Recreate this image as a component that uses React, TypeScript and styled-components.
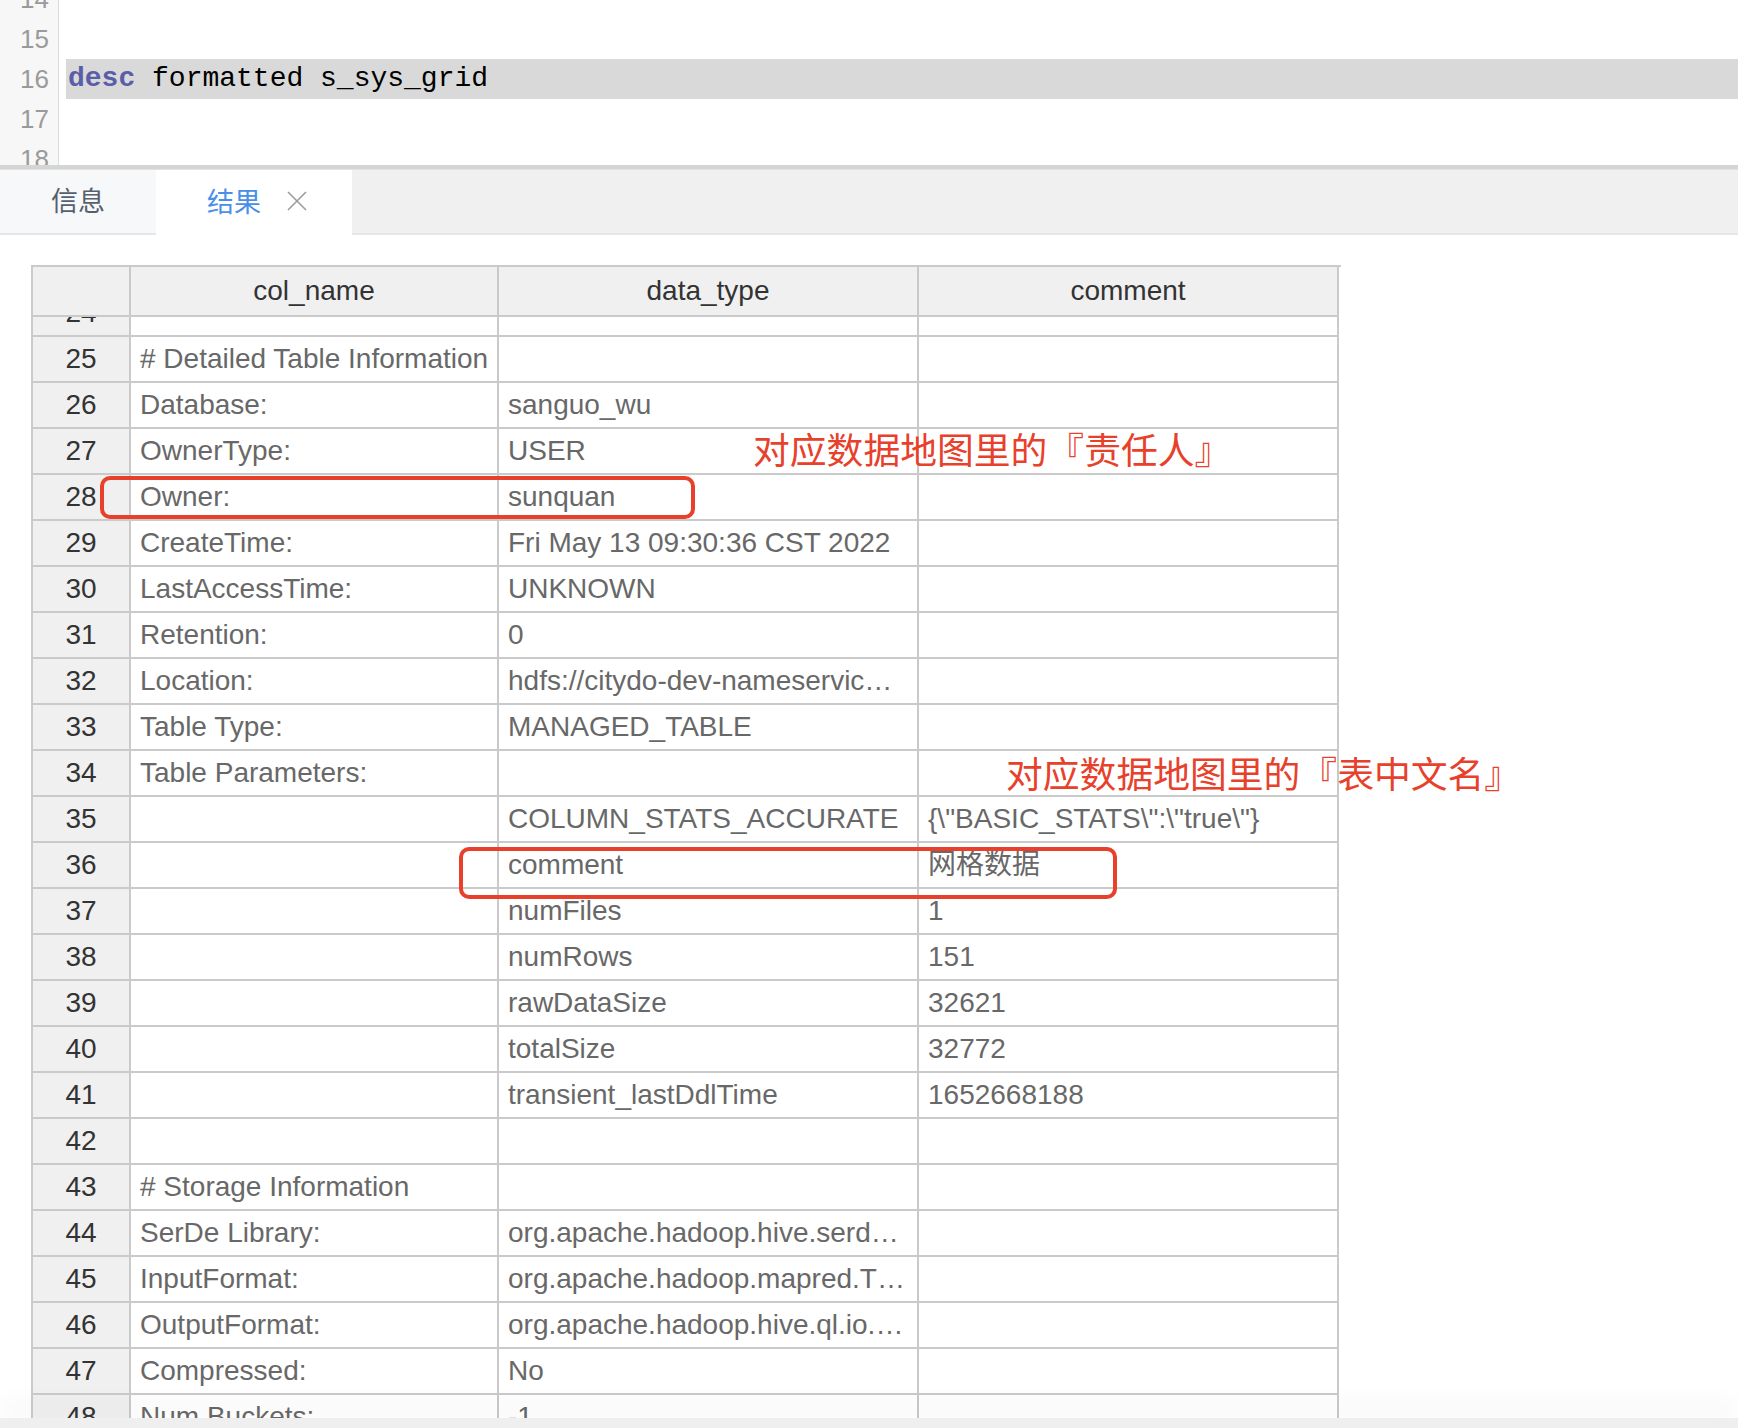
import React, { useLayoutEffect, useRef } from "react";
import styled, { createGlobalStyle } from "styled-components";

const GlobalStyle = createGlobalStyle`
  html, body {
    margin: 0;
    padding: 0;
    background: #fff;
  }
  body {
    font-family: "Liberation Sans", Arial, "Noto Sans CJK SC", sans-serif;
  }
  * {
    box-sizing: border-box;
  }
`;

const Page = styled.div`
  height: 100vh;
  display: flex;
  flex-direction: column;
  overflow: hidden;
`;

/* ---------- editor ---------- */

const Editor = styled.div`
  flex: none;
  height: 169px;
  overflow: hidden;
  border-bottom: 4px solid #d5d5d5;
`;

const EditorInner = styled.div`
  display: flex;
`;

const Gutter = styled.div`
  width: 59px;
  flex: none;
  background: #f7f7f7;
  border-right: 1px solid #dcdcdc;
`;

const LineNo = styled.div`
  height: 40px;
  line-height: 40px;
  padding-right: 9px;
  text-align: right;
  font-family: "Liberation Sans", Arial, sans-serif;
  font-size: 26px;
  color: #9a9a9a;
`;

const Code = styled.div`
  flex: 1;
  padding-left: 7px;
`;

const CodeLine = styled.div<{ $active?: boolean }>`
  height: 40px;
  line-height: 40px;
  padding-left: 2px;
  font-family: "Liberation Mono", "Courier New", monospace;
  font-size: 28px;
  color: #000;
  white-space: pre;
  background: ${(p) => (p.$active ? "#d9d9d9" : "transparent")};
`;

const Keyword = styled.span`
  color: #5a5ea8;
  font-weight: 700;
`;

/* ---------- tabs ---------- */

const TabBar = styled.div`
  flex: none;
  height: 66px;
  display: flex;
  background: #f0f0f0;
  border-top: 1px solid #e2e2e2;
  border-bottom: 2px solid #e3e7eb;
`;

const Tab = styled.div<{ $active?: boolean; $width: number }>`
  width: ${(p) => p.$width}px;
  display: flex;
  align-items: center;
  gap: 26px;
  padding: 0 0 4px 51px;
  margin-bottom: ${(p) => (p.$active ? "-2px" : "0")};
  background: ${(p) => (p.$active ? "#fff" : "#f7f8f9")};
  font-family: "Noto Sans CJK SC", sans-serif;
  font-size: 27px;
  color: ${(p) => (p.$active ? "#4a8fe7" : "#55606d")};
`;

const CloseIcon = () => (
  <svg width="20" height="20" viewBox="0 0 20 20">
    <path d="M1 1 L19 19 M19 1 L1 19" stroke="#9b9b9b" strokeWidth="1.6" fill="none" />
  </svg>
);

/* ---------- result table ---------- */

const ResultArea = styled.div`
  flex: 1;
  min-height: 0;
  display: flex;
  padding: 30px 0 0 31px;
`;

const Table = styled.div`
  position: relative;
  width: 1310px;
  display: flex;
  flex-direction: column;
  border-top: 2px solid #cacaca;
  border-left: 2px solid #cacaca;
`;

const GRID = "98px 368px 420px 420px";

const HeadRow = styled.div`
  flex: none;
  display: grid;
  grid-template-columns: ${GRID};
`;

const HeadCell = styled.div`
  height: 50px;
  display: flex;
  align-items: center;
  justify-content: center;
  background: #f0f0f0;
  border-right: 2px solid #cacaca;
  border-bottom: 2px solid #cacaca;
  font-size: 28px;
  color: #333;
`;

const Body = styled.div`
  flex: 1;
  min-height: 0;
  overflow: hidden;
`;

const Row = styled.div`
  display: grid;
  grid-template-columns: ${GRID};
`;

const IndexCell = styled.div`
  height: 46px;
  display: flex;
  align-items: center;
  justify-content: center;
  background: #f0f0f0;
  border-right: 2px solid #cacaca;
  border-bottom: 2px solid #cacaca;
  font-size: 28px;
  color: #333;
`;

const Cell = styled.div`
  height: 46px;
  line-height: 44px;
  padding: 0 3px 0 9px;
  background: #fff;
  border-right: 2px solid #cacaca;
  border-bottom: 2px solid #cacaca;
  font-size: 28px;
  color: #686868;
  white-space: nowrap;
  overflow: hidden;
  text-overflow: ellipsis;
`;

const Note = styled.div<{ $x: number; $y: number }>`
  position: absolute;
  left: ${(p) => p.$x}px;
  top: ${(p) => p.$y}px;
  line-height: 44px;
  font-family: "Noto Sans CJK SC", sans-serif;
  font-size: 36.8px;
  color: #e8412b;
  white-space: nowrap;
  pointer-events: none;
`;

const Mark = styled.div<{ $x: number; $y: number; $w: number; $h: number }>`
  position: absolute;
  left: ${(p) => p.$x}px;
  top: ${(p) => p.$y}px;
  width: ${(p) => p.$w}px;
  height: ${(p) => p.$h}px;
  border: 4px solid #e8412b;
  border-radius: 10px;
  pointer-events: none;
`;

const BottomBar = styled.div`
  position: relative;
  z-index: 2;
  flex: none;
  height: 10px;
  background: #efefef;
  box-shadow: 0 -14px 22px rgba(0, 0, 0, 0.055);
`;

const rows: [number, string, string, string][] = [
  [24, "", "", ""],
  [25, "# Detailed Table Information", "", ""],
  [26, "Database:", "sanguo_wu", ""],
  [27, "OwnerType:", "USER", ""],
  [28, "Owner:", "sunquan", ""],
  [29, "CreateTime:", "Fri May 13 09:30:36 CST 2022", ""],
  [30, "LastAccessTime:", "UNKNOWN", ""],
  [31, "Retention:", "0", ""],
  [32, "Location:", "hdfs://citydo-dev-nameservic…", ""],
  [33, "Table Type:", "MANAGED_TABLE", ""],
  [34, "Table Parameters:", "", ""],
  [35, "", "COLUMN_STATS_ACCURATE", '{\\"BASIC_STATS\\":\\"true\\"}'],
  [36, "", "comment", "网格数据"],
  [37, "", "numFiles", "1"],
  [38, "", "numRows", "151"],
  [39, "", "rawDataSize", "32621"],
  [40, "", "totalSize", "32772"],
  [41, "", "transient_lastDdlTime", "1652668188"],
  [42, "", "", ""],
  [43, "# Storage Information", "", ""],
  [44, "SerDe Library:", "org.apache.hadoop.hive.serd…", ""],
  [45, "InputFormat:", "org.apache.hadoop.mapred.T…", ""],
  [46, "OutputFormat:", "org.apache.hadoop.hive.ql.io.…", ""],
  [47, "Compressed:", "No", ""],
  [48, "Num Buckets:", "-1", ""],
  [49, "Bucket Columns:", "[]", ""],
];

const lineCount = 20;

export default function App() {
  const editorRef = useRef<HTMLDivElement>(null);
  const bodyRef = useRef<HTMLDivElement>(null);

  useLayoutEffect(() => {
    if (editorRef.current) editorRef.current.scrollTop = 13 * 40 + 21;
    if (bodyRef.current) bodyRef.current.scrollTop = 26;
  }, []);

  return (
    <Page>
      <GlobalStyle />
      <Editor ref={editorRef}>
        <EditorInner>
          <Gutter>
            {Array.from({ length: lineCount }, (_, i) => (
              <LineNo key={i}>{i + 1}</LineNo>
            ))}
          </Gutter>
          <Code>
            {Array.from({ length: lineCount }, (_, i) =>
              i + 1 === 16 ? (
                <CodeLine key={i} $active>
                  <Keyword>desc</Keyword> formatted s_sys_grid
                </CodeLine>
              ) : (
                <CodeLine key={i}> </CodeLine>
              )
            )}
          </Code>
        </EditorInner>
      </Editor>

      <TabBar>
        <Tab $width={156}>信息</Tab>
        <Tab $width={196} $active>
          结果
          <CloseIcon />
        </Tab>
      </TabBar>

      <ResultArea>
        <Table>
          <HeadRow>
            <HeadCell />
            <HeadCell>col_name</HeadCell>
            <HeadCell>data_type</HeadCell>
            <HeadCell>comment</HeadCell>
          </HeadRow>
          <Body ref={bodyRef}>
            {rows.map(([n, name, type, comment]) => (
              <Row key={n}>
                <IndexCell>{n}</IndexCell>
                <Cell>{name}</Cell>
                <Cell>{type}</Cell>
                <Cell>{comment}</Cell>
              </Row>
            ))}
          </Body>

          <Mark $x={67} $y={209} $w={595} $h={43} />
          <Mark $x={426} $y={580} $w={658} $h={52} />
          <Note $x={720} $y={159}>对应数据地图里的『责任人』</Note>
          <Note $x={973} $y={483}>对应数据地图里的『表中文名』</Note>
        </Table>
      </ResultArea>
      <BottomBar />
    </Page>
  );
}
